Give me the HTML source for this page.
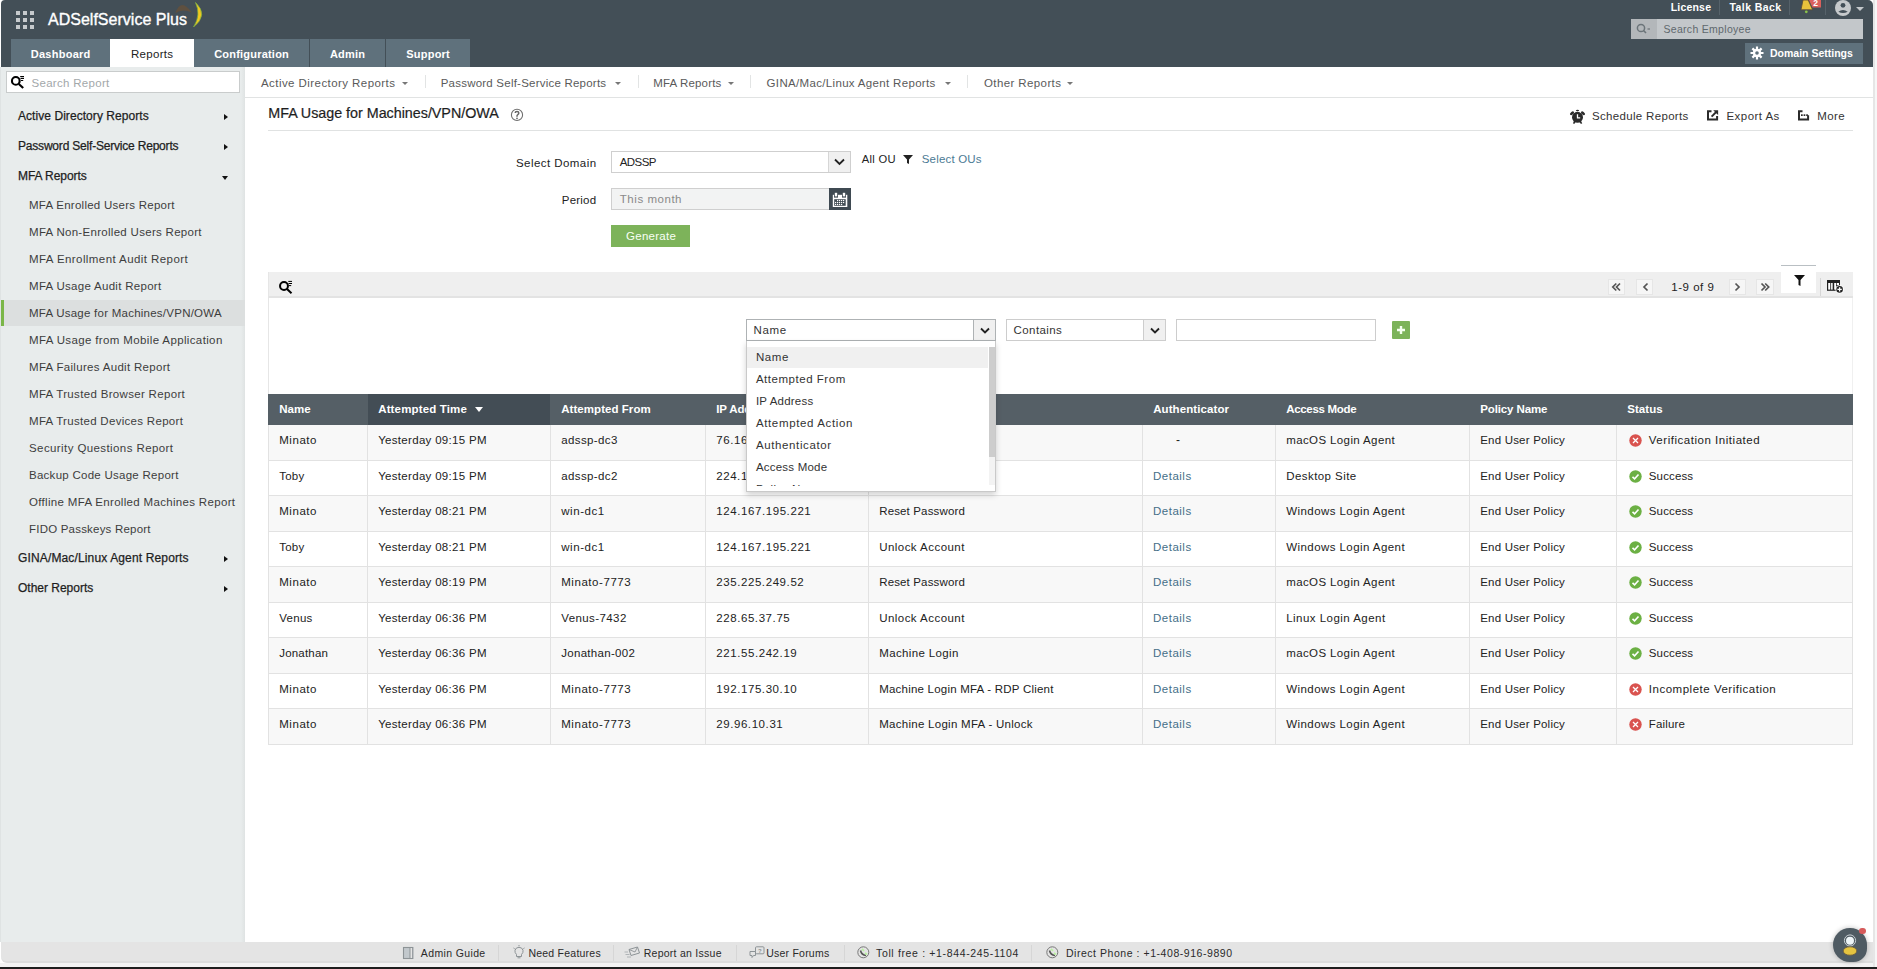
<!DOCTYPE html><html><head><meta charset="utf-8"><style>
*{box-sizing:border-box;margin:0;padding:0}
html,body{width:1877px;height:969px;overflow:hidden;background:#fff;font-family:"Liberation Sans",sans-serif;color:#222}
.a{position:absolute;white-space:nowrap}
</style></head><body>
<div class="a" style="left:1873px;top:0px;width:4px;height:969px;background:linear-gradient(to right,#e6e6e6 0,#e6e6e6 2px,#f7f7f7 2px)"></div>
<div class="a" style="left:1px;top:0px;width:1872px;height:67px;background:#434f57;border-top-right-radius:5px;border-top-left-radius:4px"></div>
<div class="a" style="left:16px;top:11px;width:4px;height:4px;background:#c6cacd"></div>
<div class="a" style="left:16px;top:18px;width:4px;height:4px;background:#c6cacd"></div>
<div class="a" style="left:16px;top:25px;width:4px;height:4px;background:#c6cacd"></div>
<div class="a" style="left:23px;top:11px;width:4px;height:4px;background:#c6cacd"></div>
<div class="a" style="left:23px;top:18px;width:4px;height:4px;background:#c6cacd"></div>
<div class="a" style="left:23px;top:25px;width:4px;height:4px;background:#c6cacd"></div>
<div class="a" style="left:30px;top:11px;width:4px;height:4px;background:#c6cacd"></div>
<div class="a" style="left:30px;top:18px;width:4px;height:4px;background:#c6cacd"></div>
<div class="a" style="left:30px;top:25px;width:4px;height:4px;background:#c6cacd"></div>
<div class="a" style="left:48px;top:12.00px;font-size:16px;line-height:16px;color:#fff;letter-spacing:0.012px;-webkit-text-stroke:0.35px #fff;">ADSelfService Plus</div>
<svg class="a" style="left:172px;top:0px" width="34" height="30" viewBox="0 0 34 30"><path d="M3.3 13.2 Q9 -2.85 19.8 12.5 Q10 8.15 3.3 13.2 Z" fill="#5e5040"/><path d="M23.5 2.5 Q36.9 14.9 21.5 27 Q29.3 14.9 23.5 2.5 Z" fill="#f2c81e" stroke="#7cb342" stroke-width="0.7"/></svg>
<div class="a" style="left:11px;top:39px;width:99px;height:28px;background:#5f717c"></div>
<div class="a" style="left:11.14px;top:49px;width:99px;text-align:center;font-size:11px;line-height:11px;letter-spacing:0.275px;font-weight:bold;color:#fff">Dashboard</div>
<div class="a" style="left:110px;top:39px;width:84px;height:28px;background:#fff"></div>
<div class="a" style="left:110.16px;top:49px;width:84px;text-align:center;font-size:11.5px;line-height:11.5px;letter-spacing:0.323px;color:#222">Reports</div>
<div class="a" style="left:194px;top:39px;width:115px;height:28px;background:#5f717c"></div>
<div class="a" style="left:194.10px;top:49px;width:115px;text-align:center;font-size:11px;line-height:11px;letter-spacing:0.208px;font-weight:bold;color:#fff">Configuration</div>
<div class="a" style="left:310px;top:39px;width:75px;height:28px;background:#5f717c"></div>
<div class="a" style="left:310.11px;top:49px;width:75px;text-align:center;font-size:11px;line-height:11px;letter-spacing:0.215px;font-weight:bold;color:#fff">Admin</div>
<div class="a" style="left:386px;top:39px;width:84px;height:28px;background:#5f717c"></div>
<div class="a" style="left:386.11px;top:49px;width:84px;text-align:center;font-size:11px;line-height:11px;letter-spacing:0.221px;font-weight:bold;color:#fff">Support</div>
<div class="a" style="left:1670.7px;top:2.00px;font-size:10.5px;line-height:10.5px;color:#fff;font-weight:bold;letter-spacing:0.198px;">License</div>
<div class="a" style="left:1719px;top:0px;width:1px;height:15px;background:#56626a"></div>
<div class="a" style="left:1729.6px;top:2.00px;font-size:10.5px;line-height:10.5px;color:#fff;font-weight:bold;letter-spacing:0.392px;">Talk Back</div>
<div class="a" style="left:1789px;top:0px;width:1px;height:15px;background:#56626a"></div>
<svg class="a" style="left:1798px;top:0px" width="26" height="16" viewBox="0 0 26 16"><path d="M5 0 H10.2 L14.6 9.8 H3 Z" fill="#e9c23c" stroke="#5a4a35" stroke-width="0.8"/><circle cx="8.3" cy="11.8" r="1.4" fill="#8bc34a"/><path d="M11 -1 H23 V7.6 H14.5 L11 0 Z" fill="#d9605c"/><text x="17.6" y="5.8" font-size="8.5" font-weight="bold" fill="#fff" text-anchor="middle" font-family="Liberation Sans">2</text></svg>
<div class="a" style="left:1825px;top:0px;width:1px;height:15px;background:#56626a"></div>
<svg class="a" style="left:1834px;top:-1px" width="18" height="18" viewBox="0 0 18 18"><circle cx="9" cy="9" r="8" fill="#c6c9cb"/><circle cx="9" cy="6.3" r="2.4" fill="#434f57"/><path d="M4.3 12.8 Q9 9.2 13.7 12.8 Q9 15.2 4.3 12.8 Z" fill="#434f57"/></svg>
<div class="a" style="left:1856px;top:7px;width:0;height:0;border-left:4px solid transparent;border-right:4px solid transparent;border-top:4px solid #c4c8cb"></div>
<div class="a" style="left:1631px;top:19px;width:232px;height:20px;background:#c3c7ca"></div>
<div class="a" style="left:1631px;top:19px;width:26px;height:20px;background:#b3b7ba"></div>
<svg class="a" style="left:1636px;top:23px" width="16" height="12" viewBox="0 0 16 12"><circle cx="5" cy="5" r="3.6" stroke="#6b7479" stroke-width="1.5" fill="none"/><path d="M7.5 7.5 L10 10" stroke="#6b7479" stroke-width="1.6"/><path d="M11.5 6 L14 6" stroke="#6b7479" stroke-width="1.2"/></svg>
<div class="a" style="left:1663.5px;top:24.00px;font-size:10.5px;line-height:10.5px;color:#5f686d;letter-spacing:0.297px;">Search Employee</div>
<div class="a" style="left:1745px;top:43px;width:118px;height:21px;background:#5f717c"></div>
<svg class="a" style="left:1750px;top:46px" width="14" height="14" viewBox="0 0 14 14"><g fill="#fff"><circle cx="7" cy="7" r="4.2"/><g stroke="#fff" stroke-width="2.2"><path d="M7 0.5V13.5M0.5 7H13.5M2.4 2.4L11.6 11.6M11.6 2.4L2.4 11.6"/></g></g><circle cx="7" cy="7" r="1.8" fill="#5f717c"/></svg>
<div class="a" style="left:1770px;top:48.00px;font-size:10.5px;line-height:10.5px;color:#fff;font-weight:bold;letter-spacing:-0.003px;">Domain Settings</div>
<div class="a" style="left:0px;top:67px;width:245px;height:875px;background:linear-gradient(to right,#e8ecec 0,#e8ecec 240px,#dde1e1 245px);border-left:1px solid #dfe3e3"></div>
<div class="a" style="left:6px;top:71px;width:234px;height:22px;background:#fff;border:1px solid #c9cccc"></div>
<svg class="a" style="left:9px;top:74px" width="16" height="16" viewBox="0 0 16 16"><circle cx="6.8" cy="6.9" r="3.85" stroke="#000" stroke-width="2.1" fill="none"/><path d="M9.8 9.9 L14.2 14" stroke="#000" stroke-width="2.1"/><path d="M11.2 2.5H15M11.5 4.4H15M12 6.5H14.2" stroke="#000" stroke-width="1.1"/></svg>
<div class="a" style="left:31.5px;top:78.00px;font-size:11.5px;line-height:11.5px;color:#a3a8aa;letter-spacing:0.302px;">Search Report</div>
<div class="a" style="left:18px;top:110.00px;font-size:12px;line-height:12px;color:#1e1e1e;letter-spacing:0.058px;-webkit-text-stroke:0.25px #1e1e1e;">Active Directory Reports</div>
<div class="a" style="left:224px;top:113.5px;width:0;height:0;border-top:3.6px solid transparent;border-bottom:3.6px solid transparent;border-left:4.6px solid #111"></div>
<div class="a" style="left:18px;top:140.00px;font-size:12px;line-height:12px;color:#1e1e1e;letter-spacing:-0.198px;-webkit-text-stroke:0.25px #1e1e1e;">Password Self-Service Reports</div>
<div class="a" style="left:224px;top:143.5px;width:0;height:0;border-top:3.6px solid transparent;border-bottom:3.6px solid transparent;border-left:4.6px solid #111"></div>
<div class="a" style="left:18px;top:170.00px;font-size:12px;line-height:12px;color:#1e1e1e;letter-spacing:-0.056px;-webkit-text-stroke:0.25px #1e1e1e;">MFA Reports</div>
<div class="a" style="left:222px;top:175.7px;width:0;height:0;border-left:3.8px solid transparent;border-right:3.8px solid transparent;border-top:4.2px solid #111"></div>
<div class="a" style="left:18px;top:552.00px;font-size:12px;line-height:12px;color:#1e1e1e;letter-spacing:0.141px;-webkit-text-stroke:0.25px #1e1e1e;">GINA/Mac/Linux Agent Reports</div>
<div class="a" style="left:224px;top:555.5px;width:0;height:0;border-top:3.6px solid transparent;border-bottom:3.6px solid transparent;border-left:4.6px solid #111"></div>
<div class="a" style="left:18px;top:582.00px;font-size:12px;line-height:12px;color:#1e1e1e;letter-spacing:-0.012px;-webkit-text-stroke:0.25px #1e1e1e;">Other Reports</div>
<div class="a" style="left:224px;top:585.5px;width:0;height:0;border-top:3.6px solid transparent;border-bottom:3.6px solid transparent;border-left:4.6px solid #111"></div>
<div class="a" style="left:29px;top:200.00px;font-size:11.5px;line-height:11.5px;color:#3d3d3d;letter-spacing:0.259px;">MFA Enrolled Users Report</div>
<div class="a" style="left:29px;top:227.00px;font-size:11.5px;line-height:11.5px;color:#3d3d3d;letter-spacing:0.296px;">MFA Non-Enrolled Users Report</div>
<div class="a" style="left:29px;top:254.00px;font-size:11.5px;line-height:11.5px;color:#3d3d3d;letter-spacing:0.424px;">MFA Enrollment Audit Report</div>
<div class="a" style="left:29px;top:281.00px;font-size:11.5px;line-height:11.5px;color:#3d3d3d;letter-spacing:0.297px;">MFA Usage Audit Report</div>
<div class="a" style="left:1px;top:300px;width:244px;height:26px;background:#dcdfdf"></div>
<div class="a" style="left:1px;top:300px;width:3px;height:26px;background:#7ab648"></div>
<div class="a" style="left:29px;top:308.00px;font-size:11.5px;line-height:11.5px;color:#3d3d3d;letter-spacing:0.245px;">MFA Usage for Machines/VPN/OWA</div>
<div class="a" style="left:29px;top:335.00px;font-size:11.5px;line-height:11.5px;color:#3d3d3d;letter-spacing:0.367px;">MFA Usage from Mobile Application</div>
<div class="a" style="left:29px;top:362.00px;font-size:11.5px;line-height:11.5px;color:#3d3d3d;letter-spacing:0.311px;">MFA Failures Audit Report</div>
<div class="a" style="left:29px;top:389.00px;font-size:11.5px;line-height:11.5px;color:#3d3d3d;letter-spacing:0.325px;">MFA Trusted Browser Report</div>
<div class="a" style="left:29px;top:416.00px;font-size:11.5px;line-height:11.5px;color:#3d3d3d;letter-spacing:0.300px;">MFA Trusted Devices Report</div>
<div class="a" style="left:29px;top:443.00px;font-size:11.5px;line-height:11.5px;color:#3d3d3d;letter-spacing:0.406px;">Security Questions Report</div>
<div class="a" style="left:29px;top:470.00px;font-size:11.5px;line-height:11.5px;color:#3d3d3d;letter-spacing:0.268px;">Backup Code Usage Report</div>
<div class="a" style="left:29px;top:497.00px;font-size:11.5px;line-height:11.5px;color:#3d3d3d;letter-spacing:0.321px;">Offline MFA Enrolled Machines Report</div>
<div class="a" style="left:29px;top:524.00px;font-size:11.5px;line-height:11.5px;color:#3d3d3d;letter-spacing:0.208px;">FIDO Passkeys Report</div>
<div class="a" style="left:245px;top:67px;width:1627px;height:30px;background:#fff"></div>
<div class="a" style="left:245px;top:97px;width:1628px;height:1px;background:#e1e3e3"></div>
<div class="a" style="left:261px;top:78.00px;font-size:11.5px;line-height:11.5px;color:#5a5a5a;letter-spacing:0.435px;">Active Directory Reports</div>
<div class="a" style="left:402px;top:82px;width:0;height:0;border-left:3.5px solid transparent;border-right:3.5px solid transparent;border-top:3.5px solid #777"></div>
<div class="a" style="left:440.7px;top:78.00px;font-size:11.5px;line-height:11.5px;color:#5a5a5a;letter-spacing:0.222px;">Password Self-Service Reports</div>
<div class="a" style="left:614.5px;top:82px;width:0;height:0;border-left:3.5px solid transparent;border-right:3.5px solid transparent;border-top:3.5px solid #777"></div>
<div class="a" style="left:653.2px;top:78.00px;font-size:11.5px;line-height:11.5px;color:#5a5a5a;letter-spacing:0.158px;">MFA Reports</div>
<div class="a" style="left:727.5px;top:82px;width:0;height:0;border-left:3.5px solid transparent;border-right:3.5px solid transparent;border-top:3.5px solid #777"></div>
<div class="a" style="left:766.6px;top:78.00px;font-size:11.5px;line-height:11.5px;color:#5a5a5a;letter-spacing:0.330px;">GINA/Mac/Linux Agent Reports</div>
<div class="a" style="left:944.5px;top:82px;width:0;height:0;border-left:3.5px solid transparent;border-right:3.5px solid transparent;border-top:3.5px solid #777"></div>
<div class="a" style="left:984px;top:78.00px;font-size:11.5px;line-height:11.5px;color:#5a5a5a;letter-spacing:0.395px;">Other Reports</div>
<div class="a" style="left:1067px;top:82px;width:0;height:0;border-left:3.5px solid transparent;border-right:3.5px solid transparent;border-top:3.5px solid #777"></div>
<div class="a" style="left:424.7px;top:75px;width:1px;height:13px;background:#e2e4e4"></div>
<div class="a" style="left:637.7px;top:75px;width:1px;height:13px;background:#e2e4e4"></div>
<div class="a" style="left:750.3px;top:75px;width:1px;height:13px;background:#e2e4e4"></div>
<div class="a" style="left:967.3px;top:75px;width:1px;height:13px;background:#e2e4e4"></div>
<div class="a" style="left:268.3px;top:106.00px;font-size:14.33px;line-height:14.33px;color:#1e1e1e;letter-spacing:-0.022px;-webkit-text-stroke:0.2px #1e1e1e;">MFA Usage for Machines/VPN/OWA</div>
<svg class="a" style="left:505px;top:104px" width="24" height="22" viewBox="0 0 24 22"><circle cx="17" cy="10.9" r="5.6" stroke="#6f6f6f" stroke-width="1.1" fill="none" transform="translate(-5 0)"/><path d="M10.2 9.1 Q10.2 7.5 12 7.5 Q13.8 7.5 13.8 9 Q13.8 10 12.8 10.6 Q12 11.1 12 12 V12.7" stroke="#666" stroke-width="1.5" fill="none"/><circle cx="12" cy="14.3" r="0.9" fill="#666"/></svg>
<div class="a" style="left:268px;top:130px;width:1585px;height:1px;background:#e0e2e2"></div>
<svg class="a" style="left:1565px;top:105px" width="25" height="22" viewBox="0 0 25 22"><circle cx="12.5" cy="12.3" r="5.5" fill="#2b2b2b"/><ellipse cx="7" cy="8.2" rx="2.4" ry="1.4" transform="rotate(-40 7 8.2)" fill="#2b2b2b"/><ellipse cx="18" cy="8.2" rx="2.4" ry="1.4" transform="rotate(40 18 8.2)" fill="#2b2b2b"/><ellipse cx="12.5" cy="5.5" rx="1.6" ry="0.8" fill="#2b2b2b"/><path d="M9.8 16.5L8.6 18.6M15.2 16.5L16.6 18.6" stroke="#2b2b2b" stroke-width="1.6"/><path d="M12.5 9.2V12.9H15.2" stroke="#fff" stroke-width="1.3" fill="none"/></svg>
<div class="a" style="left:1592px;top:111.00px;font-size:11.5px;line-height:11.5px;color:#333;letter-spacing:0.324px;">Schedule Reports</div>
<svg class="a" style="left:1700px;top:105px" width="25" height="22" viewBox="0 0 25 22"><path d="M11.5 6.2H8V14.6H17.1V11" stroke="#2b2b2b" stroke-width="2" fill="none"/><path d="M11.6 11.6L16.2 7" stroke="#2b2b2b" stroke-width="1.9"/><path d="M13.2 5.2H18.1V10.1Z" fill="#2b2b2b"/></svg>
<div class="a" style="left:1726.5px;top:111.00px;font-size:11.5px;line-height:11.5px;color:#333;letter-spacing:0.449px;">Export As</div>
<svg class="a" style="left:1795px;top:105px" width="16" height="22" viewBox="0 0 16 22"><path d="M7.5 6.2H4V14.6H13.1V10.3" stroke="#2b2b2b" stroke-width="2" fill="none"/><rect x="6" y="9.3" width="1.7" height="1.7" fill="#2b2b2b"/><rect x="8.6" y="9.3" width="1.7" height="1.7" fill="#2b2b2b"/><rect x="11.2" y="9.3" width="1.7" height="1.7" fill="#2b2b2b"/></svg>
<div class="a" style="left:1817.3px;top:111.00px;font-size:11.5px;line-height:11.5px;color:#333;letter-spacing:0.359px;">More</div>
<div class="a" style="right:1280.9px;top:158.00px;font-size:11.5px;line-height:11.5px;color:#222;letter-spacing:0.447px;margin-right:-0.447px;">Select Domain</div>
<div class="a" style="left:611px;top:151px;width:240px;height:22px;background:#fff;border:1px solid #cfcfcf"></div>
<div class="a" style="left:828px;top:152px;width:22px;height:20px;background:#f0f0f0;border-left:1px solid #d6d6d6"></div>
<svg class="a" style="left:834px;top:158px" width="11" height="8" viewBox="0 0 11 8"><path d="M1 1.5 L5.5 6 L10 1.5" stroke="#222" stroke-width="1.8" fill="none"/></svg>
<div class="a" style="left:619.8px;top:157.00px;font-size:11.5px;line-height:11.5px;color:#222;letter-spacing:-0.598px;">ADSSP</div>
<div class="a" style="left:861.8px;top:150px;font-size:11.42px;line-height:16px;color:#222"></div>
<div class="a" style="left:861.8px;top:154.00px;font-size:11.2px;line-height:11.2px;color:#222;letter-spacing:0.306px;">All OU</div>
<svg class="a" style="left:902.5px;top:155px" width="10" height="9" viewBox="0 0 10 9"><path d="M0 0H10L6 4.5V9L4 8V4.5Z" fill="#222"/></svg>
<div class="a" style="left:921.7px;top:154.00px;font-size:11.5px;line-height:11.5px;color:#4b7a94;letter-spacing:0.193px;">Select OUs</div>
<div class="a" style="right:1280.9px;top:195.00px;font-size:11.5px;line-height:11.5px;color:#222;letter-spacing:0.216px;margin-right:-0.216px;">Period</div>
<div class="a" style="left:611px;top:188px;width:240px;height:22px;background:#f2f3f3;border:1px solid #cfcfcf"></div>
<div class="a" style="left:829px;top:188px;width:22px;height:22px;background:#3f4a52"></div>
<svg class="a" style="left:829px;top:188px" width="22" height="22" viewBox="0 0 22 22"><rect x="3.8" y="6.8" width="14.5" height="12.2" fill="#fff"/><rect x="5.2" y="11.2" width="11.5" height="6.6" fill="#3f4a52"/><rect x="5" y="4.2" width="4" height="5.4" fill="#3f4a52"/><rect x="13" y="4.2" width="4" height="5.4" fill="#3f4a52"/><rect x="5.8" y="4.8" width="2.4" height="3.6" fill="#fff"/><rect x="13.8" y="4.8" width="2.4" height="3.6" fill="#fff"/><g fill="#fff"><rect x="8.0" y="11.9" width="1.2" height="1.2"/><rect x="10.0" y="11.9" width="1.2" height="1.2"/><rect x="12.0" y="11.9" width="1.2" height="1.2"/><rect x="14.0" y="11.9" width="1.2" height="1.2"/><rect x="6.0" y="13.9" width="1.2" height="1.2"/><rect x="8.0" y="13.9" width="1.2" height="1.2"/><rect x="10.0" y="13.9" width="1.2" height="1.2"/><rect x="12.0" y="13.9" width="1.2" height="1.2"/><rect x="14.0" y="13.9" width="1.2" height="1.2"/><rect x="6.0" y="15.9" width="1.2" height="1.2"/><rect x="8.0" y="15.9" width="1.2" height="1.2"/><rect x="10.0" y="15.9" width="1.2" height="1.2"/><rect x="12.0" y="15.9" width="1.2" height="1.2"/></g></svg>
<div class="a" style="left:619.8px;top:194.00px;font-size:11.5px;line-height:11.5px;color:#8a8a8a;letter-spacing:0.536px;">This month</div>
<div class="a" style="left:611px;top:225px;width:79px;height:21.5px;background:#7db35a"></div>
<div class="a" style="left:626px;top:231.00px;font-size:11.5px;line-height:11.5px;color:#f8fff4;letter-spacing:0.271px;">Generate</div>
<div class="a" style="left:268px;top:272px;width:1585px;height:26px;background:#efefef;border-bottom:2px solid #e3e3e3;border-left:1px solid #e6e6e6"></div>
<svg class="a" style="left:277px;top:279px" width="17" height="16" viewBox="0 0 17 16"><circle cx="7" cy="7" r="3.95" stroke="#000" stroke-width="2" fill="none"/><path d="M10 10 L14.5 14.2" stroke="#000" stroke-width="2"/><path d="M11.3 2.4H15M11.5 4.5H15M11.8 6.6H14.2" stroke="#000" stroke-width="1"/></svg>
<div class="a" style="left:1607.5px;top:278.5px;width:17.5px;height:16px;background:#f6f6f6;border:1px solid #e6e6e6"></div>
<svg class="a" style="left:1607.5px;top:278.5px" width="17.5" height="16" viewBox="0 0 17.5 16"><path d="M8.3 4.5L4.8 8L8.3 11.5M12 4.5L8.5 8L12 11.5" stroke="#555" stroke-width="1.7" fill="none"/></svg>
<div class="a" style="left:1635.5px;top:278.5px;width:17.5px;height:16px;background:#f6f6f6;border:1px solid #e6e6e6"></div>
<svg class="a" style="left:1635.5px;top:278.5px" width="17.5" height="16" viewBox="0 0 17.5 16"><path d="M11.5 4.5L8 8L11.5 11.5" stroke="#555" stroke-width="1.7" fill="none"/></svg>
<div class="a" style="left:1728.5px;top:278.5px;width:17.5px;height:16px;background:#f6f6f6;border:1px solid #e6e6e6"></div>
<svg class="a" style="left:1728.5px;top:278.5px" width="17.5" height="16" viewBox="0 0 17.5 16"><path d="M6.5 4.5L10 8L6.5 11.5" stroke="#555" stroke-width="1.7" fill="none"/></svg>
<div class="a" style="left:1756px;top:278.5px;width:17.5px;height:16px;background:#f6f6f6;border:1px solid #e6e6e6"></div>
<svg class="a" style="left:1756px;top:278.5px" width="17.5" height="16" viewBox="0 0 17.5 16"><path d="M5.5 4.5L9 8L5.5 11.5M9.2 4.5L12.7 8L9.2 11.5" stroke="#555" stroke-width="1.7" fill="none"/></svg>
<div class="a" style="left:1671.3px;top:282.00px;font-size:11.5px;line-height:11.5px;color:#222;letter-spacing:0.518px;">1-9 of 9</div>
<div class="a" style="left:1781px;top:265px;width:35px;height:28px;background:#fff;border-top:1px solid #b9bfc3"></div>
<svg class="a" style="left:1794px;top:275px" width="11" height="11" viewBox="0 0 11 11"><path d="M0 0H11L6.5 5V11L4.5 10V5Z" fill="#111"/></svg>
<div class="a" style="left:1820px;top:278px;width:1px;height:18px;background:#d6d6d6"></div>
<svg class="a" style="left:1826px;top:279px" width="18" height="15" viewBox="0 0 18 15"><rect x="1" y="1" width="13" height="10.8" fill="#222"/><rect x="2.2" y="4" width="1.9" height="6.6" fill="#fff"/><rect x="4.8" y="4" width="1.9" height="6.6" fill="#e8e8e8"/><rect x="8.2" y="4" width="1.9" height="6.6" fill="#fff"/><rect x="10.8" y="4" width="2.2" height="2" fill="#fff"/><circle cx="13.6" cy="10.4" r="4.1" fill="#fff"/><circle cx="13.6" cy="10.4" r="3.3" fill="#222"/><path d="M13.6 8.2V12.6M11.4 10.4H15.8" stroke="#fff" stroke-width="1.3"/></svg>
<div class="a" style="left:268px;top:298px;width:1585px;height:96px;background:#fff;border-left:1px solid #e6e6e6;border-right:1px solid #f0f0f0"></div>
<div class="a" style="left:746px;top:319px;width:250px;height:22px;background:#fff;border:1px solid #aeb2b4"></div>
<div class="a" style="left:973px;top:320px;width:22px;height:20px;background:#f0f0f0;border-left:1px solid #aeb2b4"></div>
<svg class="a" style="left:980px;top:327px" width="10" height="8" viewBox="0 0 10 8"><path d="M1 1.5 L5 5.5 L9 1.5" stroke="#222" stroke-width="1.8" fill="none"/></svg>
<div class="a" style="left:753.6px;top:325.00px;font-size:11.5px;line-height:11.5px;color:#333;letter-spacing:0.594px;">Name</div>
<div class="a" style="left:1006px;top:319px;width:160px;height:22px;background:#fff;border:1px solid #cdcdcd"></div>
<div class="a" style="left:1143px;top:320px;width:22px;height:20px;background:#f0f0f0;border-left:1px solid #cdcdcd"></div>
<svg class="a" style="left:1150px;top:327px" width="10" height="8" viewBox="0 0 10 8"><path d="M1 1.5 L5 5.5 L9 1.5" stroke="#222" stroke-width="1.8" fill="none"/></svg>
<div class="a" style="left:1013.6px;top:325.00px;font-size:11.5px;line-height:11.5px;color:#333;letter-spacing:0.404px;">Contains</div>
<div class="a" style="left:1176px;top:319px;width:200px;height:22px;background:#fff;border:1px solid #cdcdcd"></div>
<div class="a" style="left:1392px;top:321px;width:18px;height:18px;background:#7cb35a;border-radius:1px"></div>
<svg class="a" style="left:1392px;top:321px" width="18" height="18" viewBox="0 0 18 18"><path d="M9 5V13M5 9H13" stroke="#f4fff0" stroke-width="2.4"/></svg>
<div class="a" style="left:268px;top:394px;width:1585px;height:31px;background:#555f66"></div>
<div class="a" style="left:368px;top:394px;width:182px;height:31px;background:#434d55"></div>
<div class="a" style="left:279.2px;top:404.00px;font-size:11.5px;line-height:11.5px;color:#fff;font-weight:bold;letter-spacing:0.015px;">Name</div>
<div class="a" style="left:378.2px;top:404.00px;font-size:11.5px;line-height:11.5px;color:#fff;font-weight:bold;letter-spacing:0.146px;">Attempted Time</div>
<div class="a" style="left:561.2px;top:404.00px;font-size:11.5px;line-height:11.5px;color:#fff;font-weight:bold;letter-spacing:0.055px;">Attempted From</div>
<div class="a" style="left:716.2px;top:404.00px;font-size:11.5px;line-height:11.5px;color:#fff;font-weight:bold;letter-spacing:-0.116px;">IP Address</div>
<div class="a" style="left:879.2px;top:404.00px;font-size:11.5px;line-height:11.5px;color:#fff;font-weight:bold;letter-spacing:0.088px;">Attempted Action</div>
<div class="a" style="left:1153.2px;top:404.00px;font-size:11.5px;line-height:11.5px;color:#fff;font-weight:bold;letter-spacing:0.087px;">Authenticator</div>
<div class="a" style="left:1286.2px;top:404.00px;font-size:11.5px;line-height:11.5px;color:#fff;font-weight:bold;letter-spacing:-0.314px;">Access Mode</div>
<div class="a" style="left:1480.2px;top:404.00px;font-size:11.5px;line-height:11.5px;color:#fff;font-weight:bold;letter-spacing:-0.114px;">Policy Name</div>
<div class="a" style="left:1627.2px;top:404.00px;font-size:11.5px;line-height:11.5px;color:#fff;font-weight:bold;letter-spacing:0.071px;">Status</div>
<div class="a" style="left:475px;top:407px;width:0;height:0;border-left:4.5px solid transparent;border-right:4.5px solid transparent;border-top:5px solid #fff"></div>
<div class="a" style="left:268px;top:425px;width:1585px;height:36px;background:#f8f8f8;border-bottom:1px solid #e2e2e2"></div>
<div class="a" style="left:279.2px;top:435.00px;font-size:11.5px;line-height:11.5px;color:#222;letter-spacing:0.559px;">Minato</div>
<div class="a" style="left:378.2px;top:435.00px;font-size:11.5px;line-height:11.5px;color:#222;letter-spacing:0.304px;">Yesterday 09:15 PM</div>
<div class="a" style="left:561.2px;top:435.00px;font-size:11.5px;line-height:11.5px;color:#222;letter-spacing:0.393px;">adssp-dc3</div>
<div class="a" style="left:716.2px;top:435.00px;font-size:11.5px;line-height:11.5px;color:#222;letter-spacing:0.581px;">76.162.12.9</div>
<div class="a" style="left:879.2px;top:435.00px;font-size:11.5px;line-height:11.5px;color:#222;letter-spacing:0.371px;">Machine Login</div>
<div class="a" style="left:1176px;top:434.00px;font-size:12px;line-height:12px;color:#222;">-</div>
<div class="a" style="left:1286.2px;top:435.00px;font-size:11.5px;line-height:11.5px;color:#222;letter-spacing:0.386px;">macOS Login Agent</div>
<div class="a" style="left:1480.2px;top:435.00px;font-size:11.5px;line-height:11.5px;color:#222;letter-spacing:0.203px;">End User Policy</div>
<svg class="a" style="left:1628.5px;top:433.5px" width="13" height="13" viewBox="0 0 13 13"><circle cx="6.5" cy="6.5" r="6.2" fill="#d9534f"/><path d="M4 4L9 9M9 4L4 9" stroke="#fff" stroke-width="1.3"/></svg>
<div class="a" style="left:1648.8px;top:435.00px;font-size:11.5px;line-height:11.5px;color:#222;letter-spacing:0.528px;">Verification Initiated</div>
<div class="a" style="left:268px;top:461px;width:1585px;height:35px;background:#fff;border-bottom:1px solid #e2e2e2"></div>
<div class="a" style="left:279.2px;top:471.00px;font-size:11.5px;line-height:11.5px;color:#222;letter-spacing:0.266px;">Toby</div>
<div class="a" style="left:378.2px;top:471.00px;font-size:11.5px;line-height:11.5px;color:#222;letter-spacing:0.304px;">Yesterday 09:15 PM</div>
<div class="a" style="left:561.2px;top:471.00px;font-size:11.5px;line-height:11.5px;color:#222;letter-spacing:0.393px;">adssp-dc2</div>
<div class="a" style="left:716.2px;top:471.00px;font-size:11.5px;line-height:11.5px;color:#222;letter-spacing:0.581px;">224.18.60.3</div>
<div class="a" style="left:879.2px;top:471.00px;font-size:11.5px;line-height:11.5px;color:#222;letter-spacing:0.456px;">Unlock Account</div>
<div class="a" style="left:1153px;top:471.00px;font-size:11.5px;line-height:11.5px;color:#456f88;letter-spacing:0.497px;">Details</div>
<div class="a" style="left:1286.2px;top:471.00px;font-size:11.5px;line-height:11.5px;color:#222;letter-spacing:0.439px;">Desktop Site</div>
<div class="a" style="left:1480.2px;top:471.00px;font-size:11.5px;line-height:11.5px;color:#222;letter-spacing:0.203px;">End User Policy</div>
<svg class="a" style="left:1628.5px;top:469.5px" width="13" height="13" viewBox="0 0 13 13"><circle cx="6.5" cy="6.5" r="6.2" fill="#6cb044"/><path d="M3.5 6.8L5.6 8.8L9.5 4.5" stroke="#fff" stroke-width="1.6" fill="none"/></svg>
<div class="a" style="left:1648.8px;top:471.00px;font-size:11.5px;line-height:11.5px;color:#222;letter-spacing:0.138px;">Success</div>
<div class="a" style="left:268px;top:496px;width:1585px;height:36px;background:#f8f8f8;border-bottom:1px solid #e2e2e2"></div>
<div class="a" style="left:279.2px;top:506.00px;font-size:11.5px;line-height:11.5px;color:#222;letter-spacing:0.559px;">Minato</div>
<div class="a" style="left:378.2px;top:506.00px;font-size:11.5px;line-height:11.5px;color:#222;letter-spacing:0.304px;">Yesterday 08:21 PM</div>
<div class="a" style="left:561.2px;top:506.00px;font-size:11.5px;line-height:11.5px;color:#222;letter-spacing:0.568px;">win-dc1</div>
<div class="a" style="left:716.2px;top:506.00px;font-size:11.5px;line-height:11.5px;color:#222;letter-spacing:0.589px;">124.167.195.221</div>
<div class="a" style="left:879.2px;top:506.00px;font-size:11.5px;line-height:11.5px;color:#222;letter-spacing:0.147px;">Reset Password</div>
<div class="a" style="left:1153px;top:506.00px;font-size:11.5px;line-height:11.5px;color:#456f88;letter-spacing:0.497px;">Details</div>
<div class="a" style="left:1286.2px;top:506.00px;font-size:11.5px;line-height:11.5px;color:#222;letter-spacing:0.435px;">Windows Login Agent</div>
<div class="a" style="left:1480.2px;top:506.00px;font-size:11.5px;line-height:11.5px;color:#222;letter-spacing:0.203px;">End User Policy</div>
<svg class="a" style="left:1628.5px;top:504.5px" width="13" height="13" viewBox="0 0 13 13"><circle cx="6.5" cy="6.5" r="6.2" fill="#6cb044"/><path d="M3.5 6.8L5.6 8.8L9.5 4.5" stroke="#fff" stroke-width="1.6" fill="none"/></svg>
<div class="a" style="left:1648.8px;top:506.00px;font-size:11.5px;line-height:11.5px;color:#222;letter-spacing:0.138px;">Success</div>
<div class="a" style="left:268px;top:532px;width:1585px;height:35px;background:#fff;border-bottom:1px solid #e2e2e2"></div>
<div class="a" style="left:279.2px;top:542.00px;font-size:11.5px;line-height:11.5px;color:#222;letter-spacing:0.266px;">Toby</div>
<div class="a" style="left:378.2px;top:542.00px;font-size:11.5px;line-height:11.5px;color:#222;letter-spacing:0.304px;">Yesterday 08:21 PM</div>
<div class="a" style="left:561.2px;top:542.00px;font-size:11.5px;line-height:11.5px;color:#222;letter-spacing:0.568px;">win-dc1</div>
<div class="a" style="left:716.2px;top:542.00px;font-size:11.5px;line-height:11.5px;color:#222;letter-spacing:0.589px;">124.167.195.221</div>
<div class="a" style="left:879.2px;top:542.00px;font-size:11.5px;line-height:11.5px;color:#222;letter-spacing:0.456px;">Unlock Account</div>
<div class="a" style="left:1153px;top:542.00px;font-size:11.5px;line-height:11.5px;color:#456f88;letter-spacing:0.497px;">Details</div>
<div class="a" style="left:1286.2px;top:542.00px;font-size:11.5px;line-height:11.5px;color:#222;letter-spacing:0.435px;">Windows Login Agent</div>
<div class="a" style="left:1480.2px;top:542.00px;font-size:11.5px;line-height:11.5px;color:#222;letter-spacing:0.203px;">End User Policy</div>
<svg class="a" style="left:1628.5px;top:540.5px" width="13" height="13" viewBox="0 0 13 13"><circle cx="6.5" cy="6.5" r="6.2" fill="#6cb044"/><path d="M3.5 6.8L5.6 8.8L9.5 4.5" stroke="#fff" stroke-width="1.6" fill="none"/></svg>
<div class="a" style="left:1648.8px;top:542.00px;font-size:11.5px;line-height:11.5px;color:#222;letter-spacing:0.138px;">Success</div>
<div class="a" style="left:268px;top:567px;width:1585px;height:36px;background:#f8f8f8;border-bottom:1px solid #e2e2e2"></div>
<div class="a" style="left:279.2px;top:577.00px;font-size:11.5px;line-height:11.5px;color:#222;letter-spacing:0.559px;">Minato</div>
<div class="a" style="left:378.2px;top:577.00px;font-size:11.5px;line-height:11.5px;color:#222;letter-spacing:0.304px;">Yesterday 08:19 PM</div>
<div class="a" style="left:561.2px;top:577.00px;font-size:11.5px;line-height:11.5px;color:#222;letter-spacing:0.558px;">Minato-7773</div>
<div class="a" style="left:716.2px;top:577.00px;font-size:11.5px;line-height:11.5px;color:#222;letter-spacing:0.588px;">235.225.249.52</div>
<div class="a" style="left:879.2px;top:577.00px;font-size:11.5px;line-height:11.5px;color:#222;letter-spacing:0.147px;">Reset Password</div>
<div class="a" style="left:1153px;top:577.00px;font-size:11.5px;line-height:11.5px;color:#456f88;letter-spacing:0.497px;">Details</div>
<div class="a" style="left:1286.2px;top:577.00px;font-size:11.5px;line-height:11.5px;color:#222;letter-spacing:0.386px;">macOS Login Agent</div>
<div class="a" style="left:1480.2px;top:577.00px;font-size:11.5px;line-height:11.5px;color:#222;letter-spacing:0.203px;">End User Policy</div>
<svg class="a" style="left:1628.5px;top:575.5px" width="13" height="13" viewBox="0 0 13 13"><circle cx="6.5" cy="6.5" r="6.2" fill="#6cb044"/><path d="M3.5 6.8L5.6 8.8L9.5 4.5" stroke="#fff" stroke-width="1.6" fill="none"/></svg>
<div class="a" style="left:1648.8px;top:577.00px;font-size:11.5px;line-height:11.5px;color:#222;letter-spacing:0.138px;">Success</div>
<div class="a" style="left:268px;top:603px;width:1585px;height:35px;background:#fff;border-bottom:1px solid #e2e2e2"></div>
<div class="a" style="left:279.2px;top:613.00px;font-size:11.5px;line-height:11.5px;color:#222;letter-spacing:0.289px;">Venus</div>
<div class="a" style="left:378.2px;top:613.00px;font-size:11.5px;line-height:11.5px;color:#222;letter-spacing:0.304px;">Yesterday 06:36 PM</div>
<div class="a" style="left:561.2px;top:613.00px;font-size:11.5px;line-height:11.5px;color:#222;letter-spacing:0.415px;">Venus-7432</div>
<div class="a" style="left:716.2px;top:613.00px;font-size:11.5px;line-height:11.5px;color:#222;letter-spacing:0.584px;">228.65.37.75</div>
<div class="a" style="left:879.2px;top:613.00px;font-size:11.5px;line-height:11.5px;color:#222;letter-spacing:0.456px;">Unlock Account</div>
<div class="a" style="left:1153px;top:613.00px;font-size:11.5px;line-height:11.5px;color:#456f88;letter-spacing:0.497px;">Details</div>
<div class="a" style="left:1286.2px;top:613.00px;font-size:11.5px;line-height:11.5px;color:#222;letter-spacing:0.470px;">Linux Login Agent</div>
<div class="a" style="left:1480.2px;top:613.00px;font-size:11.5px;line-height:11.5px;color:#222;letter-spacing:0.203px;">End User Policy</div>
<svg class="a" style="left:1628.5px;top:611.5px" width="13" height="13" viewBox="0 0 13 13"><circle cx="6.5" cy="6.5" r="6.2" fill="#6cb044"/><path d="M3.5 6.8L5.6 8.8L9.5 4.5" stroke="#fff" stroke-width="1.6" fill="none"/></svg>
<div class="a" style="left:1648.8px;top:613.00px;font-size:11.5px;line-height:11.5px;color:#222;letter-spacing:0.138px;">Success</div>
<div class="a" style="left:268px;top:638px;width:1585px;height:36px;background:#f8f8f8;border-bottom:1px solid #e2e2e2"></div>
<div class="a" style="left:279.2px;top:648.00px;font-size:11.5px;line-height:11.5px;color:#222;letter-spacing:0.199px;">Jonathan</div>
<div class="a" style="left:378.2px;top:648.00px;font-size:11.5px;line-height:11.5px;color:#222;letter-spacing:0.304px;">Yesterday 06:36 PM</div>
<div class="a" style="left:561.2px;top:648.00px;font-size:11.5px;line-height:11.5px;color:#222;letter-spacing:0.305px;">Jonathan-002</div>
<div class="a" style="left:716.2px;top:648.00px;font-size:11.5px;line-height:11.5px;color:#222;letter-spacing:0.586px;">221.55.242.19</div>
<div class="a" style="left:879.2px;top:648.00px;font-size:11.5px;line-height:11.5px;color:#222;letter-spacing:0.371px;">Machine Login</div>
<div class="a" style="left:1153px;top:648.00px;font-size:11.5px;line-height:11.5px;color:#456f88;letter-spacing:0.497px;">Details</div>
<div class="a" style="left:1286.2px;top:648.00px;font-size:11.5px;line-height:11.5px;color:#222;letter-spacing:0.386px;">macOS Login Agent</div>
<div class="a" style="left:1480.2px;top:648.00px;font-size:11.5px;line-height:11.5px;color:#222;letter-spacing:0.203px;">End User Policy</div>
<svg class="a" style="left:1628.5px;top:646.5px" width="13" height="13" viewBox="0 0 13 13"><circle cx="6.5" cy="6.5" r="6.2" fill="#6cb044"/><path d="M3.5 6.8L5.6 8.8L9.5 4.5" stroke="#fff" stroke-width="1.6" fill="none"/></svg>
<div class="a" style="left:1648.8px;top:648.00px;font-size:11.5px;line-height:11.5px;color:#222;letter-spacing:0.138px;">Success</div>
<div class="a" style="left:268px;top:674px;width:1585px;height:35px;background:#fff;border-bottom:1px solid #e2e2e2"></div>
<div class="a" style="left:279.2px;top:684.00px;font-size:11.5px;line-height:11.5px;color:#222;letter-spacing:0.559px;">Minato</div>
<div class="a" style="left:378.2px;top:684.00px;font-size:11.5px;line-height:11.5px;color:#222;letter-spacing:0.304px;">Yesterday 06:36 PM</div>
<div class="a" style="left:561.2px;top:684.00px;font-size:11.5px;line-height:11.5px;color:#222;letter-spacing:0.558px;">Minato-7773</div>
<div class="a" style="left:716.2px;top:684.00px;font-size:11.5px;line-height:11.5px;color:#222;letter-spacing:0.586px;">192.175.30.10</div>
<div class="a" style="left:879.2px;top:684.00px;font-size:11.5px;line-height:11.5px;color:#222;letter-spacing:0.217px;">Machine Login MFA - RDP Client</div>
<div class="a" style="left:1153px;top:684.00px;font-size:11.5px;line-height:11.5px;color:#456f88;letter-spacing:0.497px;">Details</div>
<div class="a" style="left:1286.2px;top:684.00px;font-size:11.5px;line-height:11.5px;color:#222;letter-spacing:0.435px;">Windows Login Agent</div>
<div class="a" style="left:1480.2px;top:684.00px;font-size:11.5px;line-height:11.5px;color:#222;letter-spacing:0.203px;">End User Policy</div>
<svg class="a" style="left:1628.5px;top:682.5px" width="13" height="13" viewBox="0 0 13 13"><circle cx="6.5" cy="6.5" r="6.2" fill="#d9534f"/><path d="M4 4L9 9M9 4L4 9" stroke="#fff" stroke-width="1.3"/></svg>
<div class="a" style="left:1648.8px;top:684.00px;font-size:11.5px;line-height:11.5px;color:#222;letter-spacing:0.512px;">Incomplete Verification</div>
<div class="a" style="left:268px;top:709px;width:1585px;height:36px;background:#f8f8f8;border-bottom:1px solid #e2e2e2"></div>
<div class="a" style="left:279.2px;top:719.00px;font-size:11.5px;line-height:11.5px;color:#222;letter-spacing:0.559px;">Minato</div>
<div class="a" style="left:378.2px;top:719.00px;font-size:11.5px;line-height:11.5px;color:#222;letter-spacing:0.304px;">Yesterday 06:36 PM</div>
<div class="a" style="left:561.2px;top:719.00px;font-size:11.5px;line-height:11.5px;color:#222;letter-spacing:0.558px;">Minato-7773</div>
<div class="a" style="left:716.2px;top:719.00px;font-size:11.5px;line-height:11.5px;color:#222;letter-spacing:0.581px;">29.96.10.31</div>
<div class="a" style="left:879.2px;top:719.00px;font-size:11.5px;line-height:11.5px;color:#222;letter-spacing:0.278px;">Machine Login MFA - Unlock</div>
<div class="a" style="left:1153px;top:719.00px;font-size:11.5px;line-height:11.5px;color:#456f88;letter-spacing:0.497px;">Details</div>
<div class="a" style="left:1286.2px;top:719.00px;font-size:11.5px;line-height:11.5px;color:#222;letter-spacing:0.435px;">Windows Login Agent</div>
<div class="a" style="left:1480.2px;top:719.00px;font-size:11.5px;line-height:11.5px;color:#222;letter-spacing:0.203px;">End User Policy</div>
<svg class="a" style="left:1628.5px;top:717.5px" width="13" height="13" viewBox="0 0 13 13"><circle cx="6.5" cy="6.5" r="6.2" fill="#d9534f"/><path d="M4 4L9 9M9 4L4 9" stroke="#fff" stroke-width="1.3"/></svg>
<div class="a" style="left:1648.8px;top:719.00px;font-size:11.5px;line-height:11.5px;color:#222;letter-spacing:0.172px;">Failure</div>
<div class="a" style="left:367px;top:425px;width:1px;height:320px;background:#e2e2e2"></div>
<div class="a" style="left:550px;top:425px;width:1px;height:320px;background:#e2e2e2"></div>
<div class="a" style="left:705px;top:425px;width:1px;height:320px;background:#e2e2e2"></div>
<div class="a" style="left:868px;top:425px;width:1px;height:320px;background:#e2e2e2"></div>
<div class="a" style="left:1142px;top:425px;width:1px;height:320px;background:#e2e2e2"></div>
<div class="a" style="left:1275px;top:425px;width:1px;height:320px;background:#e2e2e2"></div>
<div class="a" style="left:1469px;top:425px;width:1px;height:320px;background:#e2e2e2"></div>
<div class="a" style="left:1616px;top:425px;width:1px;height:320px;background:#e2e2e2"></div>
<div class="a" style="left:268px;top:425px;width:1px;height:320px;background:#e2e2e2"></div>
<div class="a" style="left:1852px;top:425px;width:1px;height:320px;background:#e2e2e2"></div>
<div class="a" style="left:746px;top:341px;width:250px;height:150.5px;background:#fff;border:1px solid #c9c9c9;border-top:none;box-shadow:0 3px 6px rgba(0,0,0,0.18)"></div>
<div class="a" style="left:747px;top:346.5px;width:241px;height:21.5px;background:#f0f0f0"></div>
<div class="a" style="left:755.9px;top:352.00px;font-size:11.5px;line-height:11.5px;color:#333;letter-spacing:0.594px;">Name</div>
<div class="a" style="left:755.9px;top:374.00px;font-size:11.5px;line-height:11.5px;color:#333;letter-spacing:0.529px;">Attempted From</div>
<div class="a" style="left:755.9px;top:396.00px;font-size:11.5px;line-height:11.5px;color:#333;letter-spacing:0.205px;">IP Address</div>
<div class="a" style="left:755.9px;top:418.00px;font-size:11.5px;line-height:11.5px;color:#333;letter-spacing:0.640px;">Attempted Action</div>
<div class="a" style="left:755.9px;top:440.00px;font-size:11.5px;line-height:11.5px;color:#333;letter-spacing:0.626px;">Authenticator</div>
<div class="a" style="left:755.9px;top:462.00px;font-size:11.5px;line-height:11.5px;color:#333;letter-spacing:0.214px;">Access Mode</div>
<div class="a" style="left:755.9px;top:484px;height:2px;overflow:hidden;width:80px"><div class="a" style="left:0;top:0px;font-size:11.5px;line-height:11.5px;letter-spacing:0.308px;color:#333">Policy Name</div></div>
<div class="a" style="left:989px;top:346.5px;width:6px;height:138px;background:#f3f3f3"></div>
<div class="a" style="left:989px;top:346.5px;width:6px;height:110px;background:#cdcdcd"></div>
<div class="a" style="left:0px;top:963px;width:1873px;height:4px;background:#f3f3f3"></div>
<div class="a" style="left:1px;top:942px;width:1872px;height:21px;background:#e4e4e4;border-bottom:2px solid #dcdddd;border-bottom-left-radius:6px"></div>
<div class="a" style="left:0px;top:967px;width:1877px;height:2px;background:#1e1e1e"></div>
<svg class="a" style="left:402px;top:946px" width="12" height="14" viewBox="0 0 12 14"><rect x="1.5" y="1.5" width="9.2" height="11" fill="#c2c8cc" stroke="#8d9396" stroke-width="1.1"/><rect x="8" y="1.5" width="2.7" height="11" fill="#e4e4e4" stroke="#8d9396" stroke-width="1"/></svg>
<div class="a" style="left:420.8px;top:948.00px;font-size:10.5px;line-height:10.5px;color:#2a2a2a;letter-spacing:0.370px;">Admin Guide</div>
<div class="a" style="left:497.5px;top:945px;width:1px;height:16px;background:#d6d6d6"></div>
<svg class="a" style="left:513px;top:945px" width="12" height="15" viewBox="0 0 12 15"><path d="M3.5 9.5 Q1.5 7.5 2 5.3 Q2.8 2.3 6 2.3 Q9.2 2.3 10 5.3 Q10.5 7.5 8.5 9.5 V11.5 H3.5 Z" fill="none" stroke="#8d9396" stroke-width="1"/><path d="M4.5 12.8H7.5M6 0V1.3M0.5 3L1.7 3.8M11.5 3L10.3 3.8" stroke="#8d9396" stroke-width="1"/></svg>
<div class="a" style="left:528.4px;top:948.00px;font-size:10.5px;line-height:10.5px;color:#2a2a2a;letter-spacing:0.236px;">Need Features</div>
<div class="a" style="left:612.6px;top:945px;width:1px;height:16px;background:#d6d6d6"></div>
<svg class="a" style="left:624px;top:946px" width="17" height="12" viewBox="0 0 17 12"><path d="M5 3.5 L13.5 1 L15.5 7 L7 9.5 Z" fill="#e4e4e4" stroke="#8d9396" stroke-width="1"/><path d="M5 3.5 L11 6 L13.5 1" fill="none" stroke="#8d9396" stroke-width="0.9"/><path d="M0.5 6H4M1.5 8.5H5.5M3 11H7" stroke="#a9aeb1" stroke-width="0.9"/></svg>
<div class="a" style="left:643.7px;top:948.00px;font-size:10.5px;line-height:10.5px;color:#2a2a2a;letter-spacing:0.261px;">Report an Issue</div>
<div class="a" style="left:735.6px;top:945px;width:1px;height:16px;background:#d6d6d6"></div>
<svg class="a" style="left:749px;top:946px" width="16" height="13" viewBox="0 0 16 13"><rect x="6.5" y="0.8" width="8.5" height="7" rx="1" fill="#e4e4e4" stroke="#8d9396" stroke-width="1"/><path d="M1 5.5H6.5V9.5H4.5L3 11.5V9.5H1Z" fill="#e4e4e4" stroke="#8d9396" stroke-width="1"/><text x="10.8" y="6.8" font-size="6" fill="#8d9396" text-anchor="middle" font-family="Liberation Sans" font-weight="bold">?</text></svg>
<div class="a" style="left:766.3px;top:948.00px;font-size:10.5px;line-height:10.5px;color:#2a2a2a;letter-spacing:0.217px;">User Forums</div>
<div class="a" style="left:843.5px;top:945px;width:1px;height:16px;background:#d6d6d6"></div>
<svg class="a" style="left:856.5px;top:946px" width="13" height="13" viewBox="0 0 13 13"><circle cx="6.3" cy="6.3" r="5.5" fill="none" stroke="#777" stroke-width="1"/><path d="M3.5 4.5 Q4.5 9 9 9.5" stroke="#555" stroke-width="1.6" fill="none"/><path d="M5 2.8 L7 5 M8 7 L10 8.5" stroke="#b9f0a0" stroke-width="1.8"/></svg>
<svg class="a" style="left:1046.4px;top:946px" width="13" height="13" viewBox="0 0 13 13"><circle cx="6.3" cy="6.3" r="5.5" fill="none" stroke="#777" stroke-width="1"/><path d="M3.5 4.5 Q4.5 9 9 9.5" stroke="#555" stroke-width="1.6" fill="none"/><path d="M5 2.8 L7 5 M8 7 L10 8.5" stroke="#b9f0a0" stroke-width="1.8"/></svg>
<div class="a" style="left:876px;top:948.00px;font-size:10.5px;line-height:10.5px;color:#2a2a2a;letter-spacing:0.647px;">Toll free : +1-844-245-1104</div>
<div class="a" style="left:1031.3px;top:945px;width:1px;height:16px;background:#d6d6d6"></div>
<div class="a" style="left:1065.9px;top:948.00px;font-size:10.5px;line-height:10.5px;color:#2a2a2a;letter-spacing:0.545px;">Direct Phone : +1-408-916-9890</div>
<div class="a" style="left:1833px;top:927.5px;width:34px;height:34.5px;border-radius:50% 50% 40% 50%;background:#4f5b63;box-shadow:0 0 5px rgba(0,0,0,0.25)"></div>
<svg class="a" style="left:1838px;top:932px" width="24" height="26" viewBox="0 0 24 26"><circle cx="12" cy="8.5" r="5.6" fill="none" stroke="#c9d0d4" stroke-width="1"/><circle cx="12" cy="8.8" r="4" fill="#eef5f8"/><ellipse cx="12" cy="19" rx="6.8" ry="4.2" fill="#e5c440" stroke="#6b5a3c" stroke-width="0.8"/></svg>
<div class="a" style="left:1859px;top:927.5px;width:6.5px;height:6.5px;background:#d65a5a;border-radius:50%"></div>
</body></html>
